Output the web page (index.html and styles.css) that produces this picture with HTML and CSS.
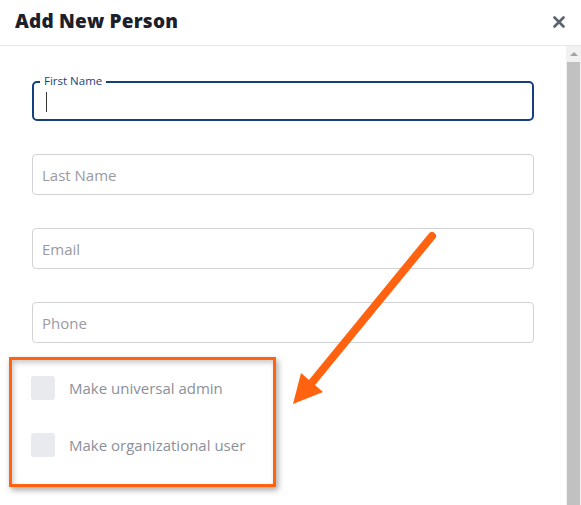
FILE: index.html
```html
<!DOCTYPE html>
<html lang="en">
<head>
    <meta charset="UTF-8">
    <title>Add New Person</title>
    <link rel="stylesheet" href="styles.css">
</head>
<body>

    <div class="modal">
        <div class="modal-header">
            <h2>Add New Person</h2>
            <svg class="close" width="12" height="12" viewBox="0 0 12 12">
                <path d="M1.5 1.5 L10.5 10.5 M10.5 1.5 L1.5 10.5" stroke="#5b6272" stroke-width="2.6" stroke-linecap="round"/>
            </svg>
        </div>

        <div class="modal-body">
            <form class="person-form">
                <!-- focused field with floating label -->
                <div class="field field-active">
                    <span class="float-label">First Name</span>
                    <span class="caret"></span>
                </div>
                <div class="field">Last Name</div>
                <div class="field">Email</div>
                <div class="field">Phone</div>

                <div class="checks">
                    <label class="check"><span class="box"></span>Make universal admin</label>
                    <label class="check"><span class="box"></span>Make organizational user</label>
                </div>
            </form>

            <div class="scrollbar">
                <div class="scroll-up"></div>
                <div class="scroll-thumb"></div>
            </div>
        </div>

        <!-- annotation -->
        <div class="highlight"></div>
        <svg class="arrow" width="160" height="190" viewBox="280 225 160 190">
            <line x1="432" y1="236" x2="310" y2="385" stroke="#ff630f" stroke-width="8" stroke-linecap="round"/>
            <polygon points="293,404 301,373 323,392" fill="#ff630f"/>
        </svg>
    </div>

</body>
</html>
```

FILE: styles.css
```css
:root {
    --navy: #173f80;
    --line: #d2d2d2;
    --muted: #9a9a9f;
    --orange: #ff630f;
}

* {
    margin: 0;
    padding: 0;
    box-sizing: border-box;
    font-family: "Open Sans", Lato, sans-serif;
}

body {
    background: white;
    width: 581px;
    height: 505px;
    overflow: hidden;
}

.modal {
    position: relative;
    height: 505px;
}

.modal-header {
    height: 46px;
    border-bottom: 1px solid #e8e8e8;
    display: flex;
    justify-content: space-between;
    align-items: center;
    padding: 0 16px 4px 15px;
}

.modal-header h2 {
    font-size: 19px;
    font-weight: 800;
    color: #1d1f2b;
    letter-spacing: 0.2px;
}

.close {
    margin-top: 2px;
}

.modal-body {
    display: flex;
    height: 459px;
}

.person-form {
    flex: 1;
    padding: 35px 32px 0 32px;
    display: flex;
    flex-direction: column;
    gap: 33px;
}

.field {
    height: 41px;
    border: 1px solid var(--line);
    border-radius: 4px;
    padding-left: 9px;
    display: flex;
    align-items: center;
    font-size: 15px;
    color: var(--muted);
}

.field-active {
    position: relative;
    border: 2px solid var(--navy);
    border-radius: 5px;
    height: 40px;
    padding-left: 12px;
}

.float-label {
    position: absolute;
    top: -10px;
    left: 6px;
    padding: 0 4px;
    background: white;
    font-size: 11.5px;
    color: var(--navy);
}

.caret {
    width: 1px;
    height: 20px;
    background: #333;
    margin-top: 2px;
}

.checks {
    display: flex;
    flex-direction: column;
    gap: 33px;
}

.check {
    display: flex;
    align-items: center;
    gap: 14px;
    font-size: 15px;
    color: #8b909a;
    height: 24px;
}

.box {
    width: 24px;
    height: 24px;
    border-radius: 3px;
    background: #e9eaed;
    margin-left: -1px;
}

.scrollbar {
    width: 15px;
    background: #f1f1f1;
    display: flex;
    flex-direction: column;
}

.scroll-up {
    height: 16px;
    position: relative;
}

.scroll-up::after {
    content: "";
    position: absolute;
    left: 4px;
    top: 6px;
    border-left: 4px solid transparent;
    border-right: 4px solid transparent;
    border-bottom: 4px solid #a3a3a3;
}

.scroll-thumb {
    flex: 1;
    margin: 0 1px;
    background: #c1c1c1;
}

.highlight {
    position: absolute;
    left: 9px;
    top: 357px;
    width: 267px;
    height: 130px;
    border: 3px solid var(--orange);
    box-shadow: 2px 3px 6px rgba(0, 0, 0, 0.35), inset 2px 3px 5px rgba(0, 0, 0, 0.2);
}

.arrow {
    position: absolute;
    left: 280px;
    top: 225px;
}
```
